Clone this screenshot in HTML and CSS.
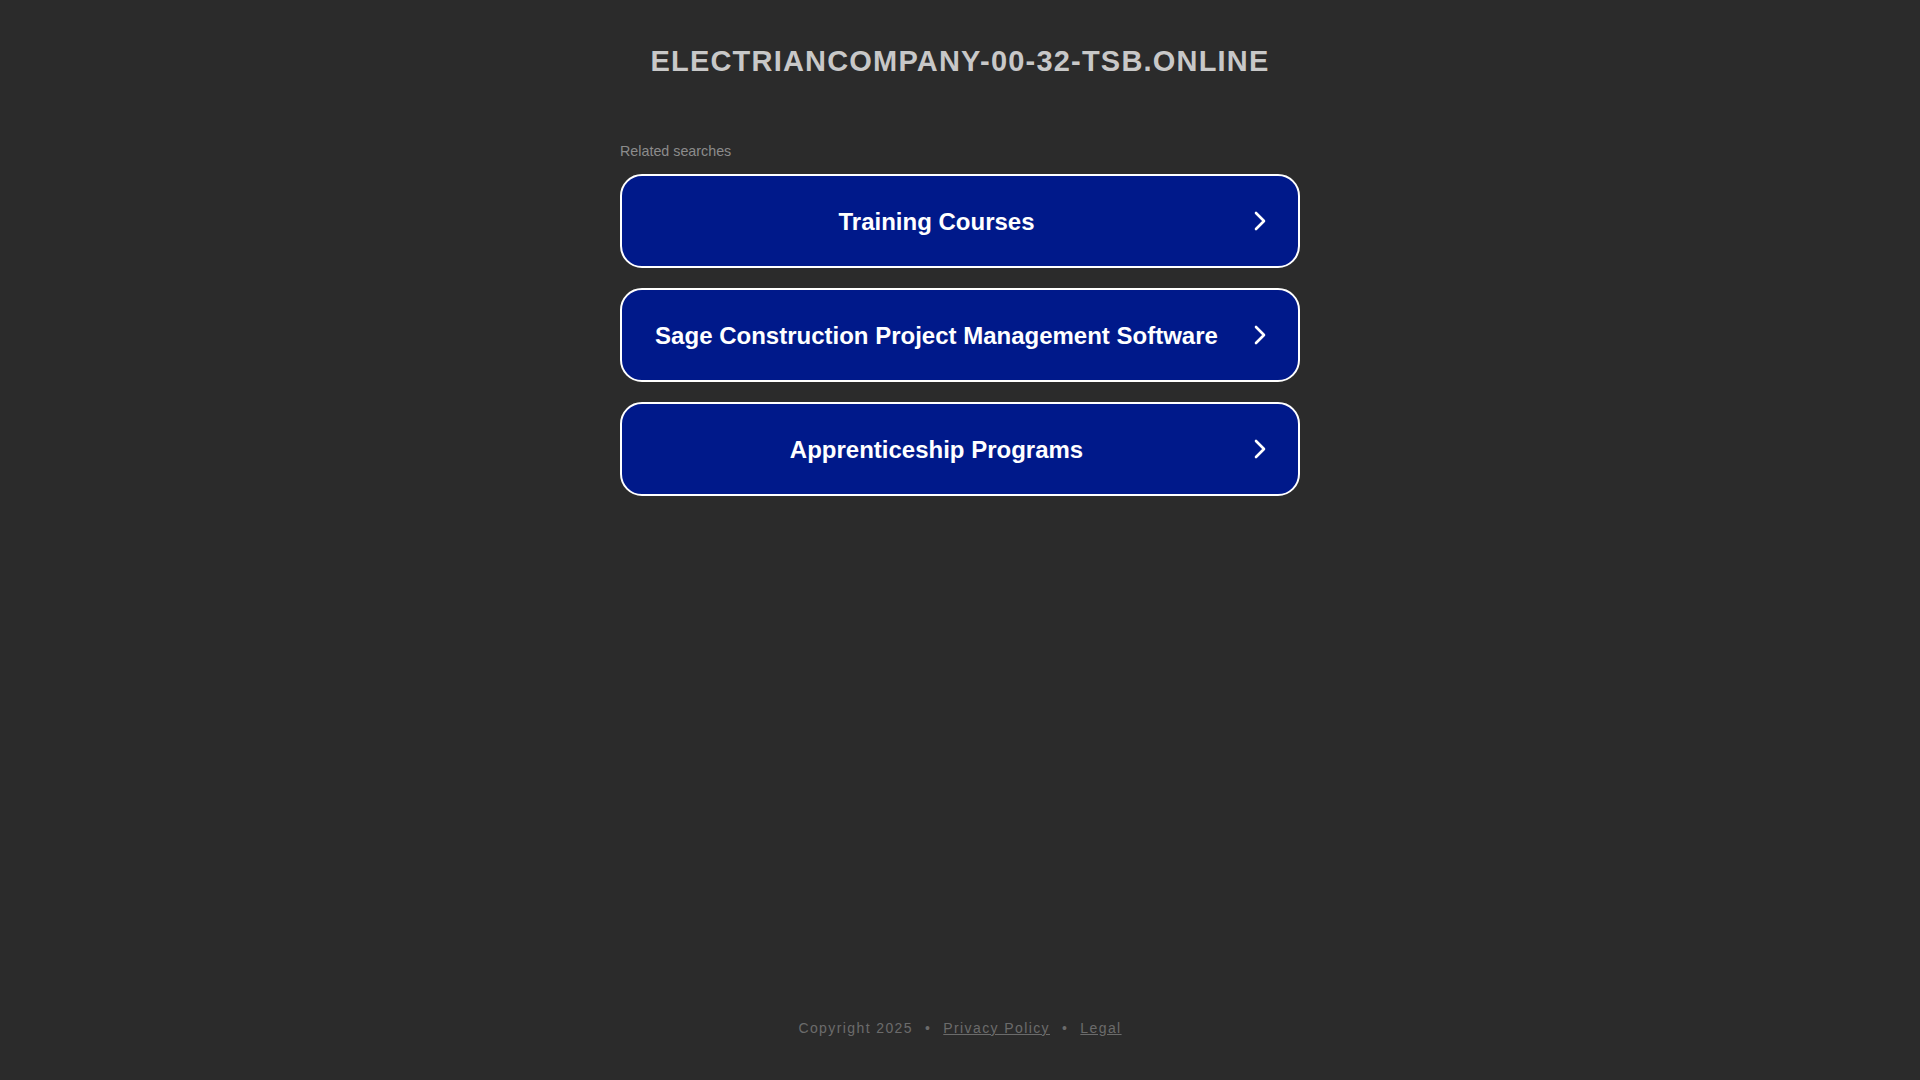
FILE: index.html
```html
<!DOCTYPE html>
<html lang="en">
<head>
<meta charset="utf-8">
<title>electriancompany-00-32-tsb.online</title>
<link rel="stylesheet" href="styles.css">
</head>
<body>
<div class="page">
  <h1 class="title">ELECTRIANCOMPANY-00-32-TSB.ONLINE</h1>
  <div class="related">
    <div class="related-label">Related searches</div>
    <a class="result" href="#"><span class="result-text">Training Courses</span><svg class="chev" viewBox="0 0 12 20" width="12" height="20"><polyline points="2,2 10,10 2,18" fill="none" stroke="#fff" stroke-width="2.6" stroke-linecap="round" stroke-linejoin="round"/></svg></a>
    <a class="result" href="#"><span class="result-text">Sage Construction Project Management Software</span><svg class="chev" viewBox="0 0 12 20" width="12" height="20"><polyline points="2,2 10,10 2,18" fill="none" stroke="#fff" stroke-width="2.6" stroke-linecap="round" stroke-linejoin="round"/></svg></a>
    <a class="result" href="#"><span class="result-text">Apprenticeship Programs</span><svg class="chev" viewBox="0 0 12 20" width="12" height="20"><polyline points="2,2 10,10 2,18" fill="none" stroke="#fff" stroke-width="2.6" stroke-linecap="round" stroke-linejoin="round"/></svg></a>
  </div>
  <div class="footer">
    <span>Copyright 2025</span><span class="dot">•</span><a href="#">Privacy Policy</a><span class="dot">•</span><a href="#">Legal</a>
  </div>
</div>
</body>
</html>
```
FILE: styles.css
```css
html, body {
  margin: 0;
  padding: 0;
  background: #2b2b2b;
}
body {
  font-family: "Liberation Sans", Arial, sans-serif;
}
.page {
  display: flex;
  flex-direction: column;
  align-items: center;
  min-height: 100vh;
  box-sizing: border-box;
}
.title {
  margin: 44px 0 0;
  font-size: 29px;
  line-height: 35px;
  font-weight: bold;
  letter-spacing: 1.2px;
  color: #c8c8c8;
}
.related {
  width: 680px;
  margin-top: 64px;
  display: flex;
  flex-direction: column;
}
.related-label {
  font-size: 14.3px;
  line-height: 17px;
  color: #8c8c8c;
  margin-bottom: 14px;
}
.result {
  display: flex;
  align-items: center;
  box-sizing: border-box;
  height: 94px;
  margin-bottom: 20px;
  padding: 2px 32px 0 33px;
  background: #00198a;
  border: 2px solid #fff;
  border-radius: 22px;
  color: #fff;
  text-decoration: none;
}
.result-text {
  flex: 1;
  text-align: center;
  font-size: 24px;
  font-weight: bold;
}
.chev {
  margin-left: 36px;
  flex: none;
  margin-top: -2px;
}
.footer {
  margin-top: auto;
  padding-bottom: 42px;
  font-size: 14px;
  line-height: 20px;
  letter-spacing: 1.4px;
  color: #6b6b6b;
}
.footer a {
  color: #6b6b6b;
  text-decoration: underline;
}
.dot {
  margin: 0 12px;
}
```
